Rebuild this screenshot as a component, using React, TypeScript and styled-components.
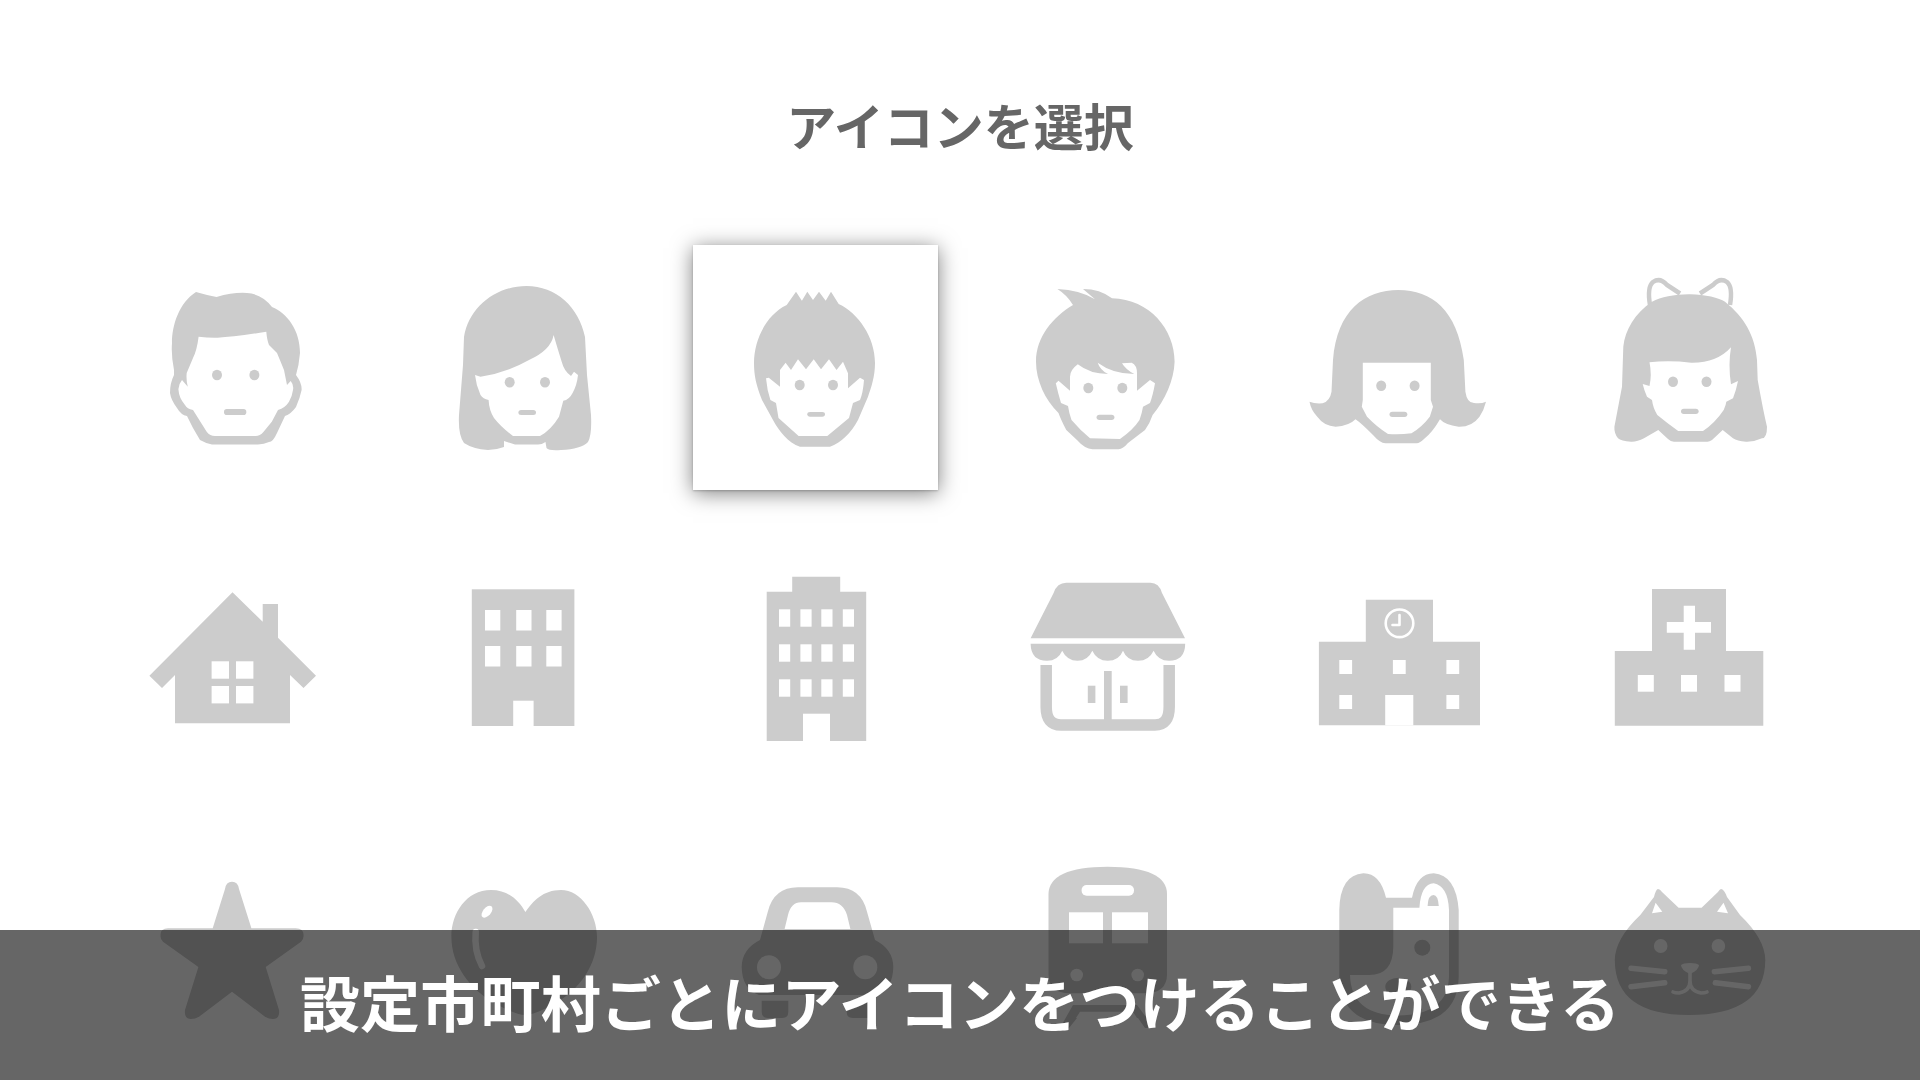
import React from 'react';
import styled, { createGlobalStyle } from 'styled-components';

const GlobalStyle = createGlobalStyle`
  html, body {
    margin: 0;
    padding: 0;
    background: #fff;
  }
`;

const Page = styled.div`
  position: relative;
  height: 1080px;
  overflow: hidden;
  padding-top: 90px;
  box-sizing: border-box;
  font-family: "Noto Sans CJK JP", "Noto Sans", sans-serif;
`;

const Title = styled.h1`
  margin: 0 0 87px;
  font-size: 50px;
  line-height: 68px;
  font-weight: 700;
  color: #666;
  text-align: center;
`;

const Grid = styled.div`
  display: grid;
  grid-template-columns: repeat(6, 245px);
  grid-auto-rows: 245px;
  gap: 47px;
  padding-left: 109px;
`;

const Cell = styled.div<{ $selected?: boolean }>`
  background: #fff;
  box-shadow: ${(props) =>
    props.$selected ? '0 3px 20px rgba(0, 0, 0, 0.5), 0 1px 2px rgba(0, 0, 0, 0.2)' : 'none'};
`;

const Glyph = styled.svg`
  display: block;
  width: 245px;
  height: 245px;
  fill: #ccc;

  .cut {
    fill: #fff;
  }
  .line {
    fill: none;
    stroke: #ccc;
  }
  .cutline {
    fill: none;
    stroke: #fff;
    stroke-linecap: round;
    stroke-linejoin: round;
  }
`;

const Banner = styled.div`
  position: absolute;
  left: 0;
  right: 0;
  bottom: 0;
  height: 150px;
  box-sizing: border-box;
  padding-bottom: 8px;
  display: flex;
  align-items: center;
  justify-content: center;
  background: rgba(0, 0, 0, 0.6);
`;

const Caption = styled.span`
  font-size: 60px;
  line-height: 1;
  font-weight: 700;
  letter-spacing: 0.2px;
  color: #fff;
`;

type FaceProps = { eyes: [number, number, number]; mouth: [number, number, number, number] };

// eyes: left x, right x, y / mouth: x, y, w, h
const Face = ({ eyes, mouth }: FaceProps) => (
  <>
    <ellipse cx={eyes[0]} cy={eyes[2]} rx={5} ry={5.3} />
    <ellipse cx={eyes[1]} cy={eyes[2]} rx={5} ry={5.3} />
    <rect x={mouth[0]} y={mouth[1]} width={mouth[2]} height={mouth[3]} rx={2.8} />
  </>
);

const Man = () => (
  <>
    <path d="M87 47Q97 50 107.5 52Q125 47 138 48Q153 49 163 62C178 68 191 85 191 108Q190 120 187 130Q193 138 192.6 145Q191 153 187 162Q182 169 176 171L168 188Q164 197 160 197Q155 199 149 199.5L103 199.5Q96 198 91 195L84 183L78 171Q72 170 68 163Q62 155 61 148Q61 138 65 130L65 125Q62 110 63 98C63 80 70 58 87 47Z" />
    <path className="cut" d="M89.6 91.7Q100 93 108.6 92.7Q125 92 157.3 86.7Q158 95 160 100L168 108Q173 120 175 125L178 140L181.7 136Q185 140 184 145Q183 152 180 156.7Q176 163 169 165L162.8 176.7L154.6 186.7Q151 191 146.5 191L106 191Q101 191 97.7 186.7L84 165Q78 164 76 160Q70 153 69.5 145Q69 140 73 135L78.8 141.7Q77 135 77.7 128L84 113Q88 105 89.6 91.7Z" />
    <Face eyes={[108, 145.4, 130]} mouth={[115, 164, 22.3, 6]} />
  </>
);

const LongHair = () => (
  <>
    <path d="M125.5 41C155 41 178 62 184 92L186 130L190 170Q191 190 187 197Q180 204 160 205Q148 206 145.5 203L144.5 197Q140 200 136 199.5L114 199.5L103 196L103 202Q95 205 87 205Q72 204 63 198Q57 190 58 170L62 120L63 92C68 62 95 41 125.5 41Z" />
    <path className="cut" d="M74 130L79.5 131.7Q105 128 128 115Q150 105 152.6 90Q157 105 160.7 116.7Q163 126 170 131L173 126.7L177 130Q176 140 171.6 148Q168 155 162.3 155.7L158 171.7Q150 185 139 191L112 191Q100 182 93 173Q88 165 87.6 155Q82 154 79.5 150Q75 140 74 130Z" />
    <Face eyes={[108.7, 144, 137.3]} mouth={[117.4, 165, 17.6, 5]} />
  </>
);

const SpikyBoy = () => (
  <>
    <path d="M93.7 60L103 46.7L108.9 55.7L114.3 46.7L120 55L126 46.7L132.7 55.7L138 46.7L145.7 59C165 68 182 92 182 118C182 132 178 143 175 151.7L165 175C158 188 148 198 137 201.7L107 201.7C95 198 86 186 80 175L69 155C63 140 61 130 61 118C61 95 73 70 93.7 60Z" />
    <path className="cut" d="M87 141.7L87 125L92.6 117.7L98 125L105 114.3L113 124.3L120.7 114.3L128 124.3L136 114.3L143.5 125L150 116.7L155 128.3L155 143.3L167 132.7L171 135Q170 148 167 155L160 158L156 173L134.3 191L105.6 191L85.5 173L83 158L77.4 155Q74 145 73 133.3L75.8 132.7Z" />
    <Face eyes={[106.7, 140, 140]} mouth={[114.3, 167, 17.7, 4.7]} />
  </>
);

const TuftBoy = () => (
  <>
    <path d="M72.4 44Q95 45 110 54.3L98 44Q115 44 127 53.3C165 54 189.6 85 189.6 116.7C189 135 180 155 167.6 170Q165 178 160 185L143 198Q138 204 133.6 204.3L107.4 204.3Q100 204 92 195L81.3 185Q76 175 73.5 168C60 155 51 135 51 116.7C51 92 68 72 88 60Q82 50 72.4 44Z" />
    <path className="cut" d="M92.8 119.3Q105 129 123 129Q115 125 112.7 117.7Q128 129 149.3 129Q141 125 137 118.3L146.7 117.7Q152 120 152 128.3L152 145.7L165 135L170 138.3Q168 150 165 158L158 161.7Q157 168 154.5 175Q148 185 135 194L105 193.3Q95 185 86.5 175Q84 168 83 161L76 158Q73 148 70.8 138.3L73.5 135.7L85 145.7L85 131.7Q85 125 92.8 119.3Z" />
    <Face eyes={[103.3, 137.3, 143]} mouth={[111.6, 169.7, 17.8, 5.3]} />
  </>
);

const BobHair = () => (
  <>
    <path d="M121.4 45C155 45 180 65 186.8 115L188.4 146.7Q190 158 197 158Q204 159 209 156.7Q207 165 202.5 171.7Q195 182 181.6 181.7Q168 180 163 174.3Q155 188 147 194Q143 198 139.7 198.3L108.3 198.3Q103 198 96 190Q84 178 78.5 174.3Q72 181 58.6 181.7Q47 181 40.3 171.7Q34 165 32.5 156.7Q38 159 45.6 158.3Q53 156 54.5 146.7L56 115C60 65 88 45 121.4 45Z" />
    <path className="cut" d="M85.8 117.7L153.8 117.7L153.8 155L156 161.7L152.8 171.7Q145 182 134.5 188.3Q122 190 111 189Q100 182 90 171.7L84.8 161.7L85.8 155Z" />
    <Face eyes={[104.2, 137.6, 140.7]} mouth={[112.5, 166.7, 17.8, 5.3]} />
  </>
);

const BowGirl = () => (
  <>
    <path className="line" strokeWidth="4.5" d="M81 60Q78 42 84 37Q91 32 98 40L111 48.5M161 60Q164 42 158 37Q151 32 144 40L131 48.5" />
    <path d="M119.7 49.3C135 49 150 53 156 56.7C175 72 186 90 188 115L188.7 135Q194 165 198 181.7Q198 193 193 193.3Q185 197 177 196.7Q168 196 164 193.3L153.7 185L143 195Q140 197 138 196.7L105.6 196.7Q102 197 99 194L89.3 185L75 193.3Q68 197 62 196.7Q52 196 49 193.3Q45 188 45.4 181.7L53 141.7L54.3 101.7C56 85 66 68 83 56.7C92 52 105 49.5 119.7 49.3Z" />
    <path className="cut" d="M80.5 117.3Q100 115 122.3 117.7Q148 118 162 102.3Q159 120 162 139.3L169 136Q167 146 164 153.3L157.3 156.7Q157 160 154.7 165Q146 178 134 186L109.2 186Q98 178 88.3 170Q84 163 83 155L78 151.7Q75 145 73.7 139L80.5 141Q83 130 80.5 117.3Z" />
    <Face eyes={[104, 137.5, 136.7]} mouth={[112, 163.7, 17.6, 5.3]} />
  </>
);

const House = () => (
  <>
    <path d="M123.5 55.3L153.7 84.7L153.7 67L169 67L169 100.7L207 138.7L194.5 151L181 138L181 186.3L66 186.3L66 138L53 151L40.4 138.7Z" />
    {[102.6, 127].map((x) =>
      [124.3, 149].map((y) => <rect key={`${x}-${y}`} className="cut" x={x} y={y} width={17.4} height={17.4} />),
    )}
  </>
);

const Office = () => (
  <>
    <rect x={70.8} y={52.3} width={102.6} height={136.7} />
    {[84, 115.2, 145.3].map((x) =>
      [73, 109].map((y) => <rect key={`${x}-${y}`} className="cut" x={x} y={y} width={15.3} height={20.5} />),
    )}
    <rect className="cut" x={112.2} y={163.7} width={20.4} height={25.3} />
  </>
);

const Tower = () => (
  <>
    <path d="M99.2 39.7H147.2V54.7H173.2V204H73.7V54.7H99.2Z" />
    {[86, 107.4, 128.3, 149.8].map((x) =>
      [72.3, 107.3, 142.3].map((y) => <rect key={`${x}-${y}`} className="cut" x={x} y={y} width={11.2} height={17.4} />),
    )}
    <rect className="cut" x={110} y={176.7} width={27} height={27.3} />
  </>
);

const Shop = () => (
  <>
    <path d="M68.6 56Q72 45.7 81.3 45.7H165.5Q174 45.7 177 56L200 101.3H45.6Z" />
    <path d="M45.6 106.7H200.2Q200 123.7 184 123.7Q173 123.7 168.6 113.7Q164 123.7 153 123.7Q142 123.7 138 113.7Q134 123.7 122.7 123.7Q112 123.7 107.3 113.7Q103 123.7 92.5 123.7Q82 123.7 77.2 113.7Q73 123.7 62 123.7Q46 123.7 45.6 106.7Z" />
    <path className="line" strokeWidth="11.5" d="M61.2 128V170Q61.2 188 76 188H170Q184.2 188 184.2 170V128" />
    <rect x={119} y={134} width={7.7} height={50} />
    <rect x={102.8} y={148.7} width={7.6} height={17.3} />
    <rect x={135} y={148.7} width={7.6} height={17.3} />
  </>
);

const School = () => (
  <>
    <path d="M88.8 62.7H156V104.7H203V188.3H41.9V104.7H88.8Z" />
    <circle className="cutline" cx={122.5} cy={86.3} r={13.8} strokeWidth={2.6} />
    <path className="cutline" strokeWidth={2.6} d="M122.5 78V88H115.5" />
    {[62.3, 115.9, 169.4].map((x) => (
      <rect key={x} className="cut" x={x} y={123} width={12.8} height={14} />
    ))}
    {[62.3, 169.4].map((x) => (
      <rect key={x} className="cut" x={x} y={158} width={12.8} height={14} />
    ))}
    <rect className="cut" x={108.2} y={158} width={28.1} height={30.3} />
  </>
);

const Hospital = () => (
  <>
    <path d="M83 52H157V114H194.3V188.7H45.8V114H83Z" />
    <path className="cut" d="M114.7 68.7H126V85H142V95.7H126V112.7H114.7V95.7H97.8V85H114.7Z" />
    {[68.8, 112, 155.5].map((x) => (
      <rect key={x} className="cut" x={x} y={138} width={16} height={16.7} />
    ))}
  </>
);

const Star = () => (
  <path d="M123 52.7Q117 52.7 116 60L103.7 99.3L59 99.3Q51 100 51.6 106Q51 110 54 112.7L89.4 138L76 181Q75 190 82 190Q86 190 90 187.7L123 162.7L156 187.7Q160 190 164 190Q171 190 170 181L156.7 138L192 112.7Q195 110 194.5 106Q195 100 186.8 99.3L142.4 99.3L130 60Q129 52.7 123 52.7Z" />
);

const Apple = () => (
  <>
    <path d="M124.4 83C118 72 108 61 90 61C65 61 50 85 50.4 108C50.4 135 68 160 95 175Q115 186 124 186Q133 186 153 175C180 160 196 135 196 108C196 85 180 61 160 61C142 61 132 72 124.4 83Z" />
    <ellipse className="cut" cx={86} cy={82.7} rx={4} ry={7} transform="rotate(40 86 82.7)" />
    <path className="cutline" strokeWidth={6.5} d="M74.7 103Q73 122 81 137" />
  </>
);

const Car = () => (
  <>
    <path d="M105.4 58.3H143.6Q168 58 174 82.7L182 111Q200 120 200.3 138Q200 160 183 166H66Q49 160 48.7 138Q49 120 67 111L74.8 82.7Q81 58 105.4 58.3Z" />
    <path className="cut" d="M91.6 100L157.4 100L154 86Q150 73.3 138.5 73.3H108Q98 73.3 95 86Z" />
    <circle className="cut" cx={76} cy={138.3} r={12} />
    <circle className="cut" cx={172.3} cy={138.3} r={12} />
    <path d="M68.7 171.7H95.3V183Q95.3 189 89 189H75Q68.7 189 68.7 183Z" />
    <path d="M153.7 171.7H180.3V183Q180.3 189 174 189H160Q153.7 189 153.7 183Z" />
  </>
);

const Train = () => (
  <>
    <path d="M63.5 65Q64 38 122.5 37.7Q182 38 182 65V145Q182 164.3 160 164.3H85Q63.5 164.3 63.5 145Z" />
    <rect className="cut" x={96.6} y={56} width={52.4} height={10.7} rx={5} />
    <rect className="cut" x={84} y={83.3} width={34} height={31} />
    <rect className="cut" x={127} y={83.3} width={36} height={31} />
    <circle className="cut" cx={91.7} cy={146} r={6.3} />
    <circle className="cut" cx={152.7} cy={146} r={6.3} />
    <path d="M88 176H152L169 199H160L153 189H92L84 199H75Z" />
    <path className="cut" d="M95 182.7H148L152 189H91Z" />
  </>
);

const Dog = () => (
  <>
    <path d="M86.3 44.3Q103 44 109 68.7H135Q140 44.3 156.7 44.3Q179 46 181.7 81V147.7Q181 196 121 196Q63 196 62.3 147.7V81Q63 46 86.3 44.3Z" />
    <path className="cut" d="M116.3 78.7H142.4Q144 55 156.7 54.3Q171 57 172 81V147.7Q171 186 121 186.5Q74 186 73 146H92.3Q116 146 116.3 117.7Z" />
    <path d="M150.6 77Q151 66 156.5 66Q161 66 161.8 77Z" />
    <circle cx={145.3} cy={118.7} r={8} />
    <ellipse cx={121.3} cy={157.7} rx={13} ry={9} />
  </>
);

const Cat = () => (
  <>
    <path d="M89 60Q91 60 93 63L109.6 78.7H132.6L149 63Q151 60 152 60Q155 60 158 68L171 86Q196 110 196.3 131Q196 186 119.8 186Q46 186 45.8 131Q46 110 71.3 86L85 68Q87 60 89 60Z" />
    <path className="cut" d="M86.6 73.7L93.3 82.7L83 84.3ZM154.5 73.7L148 82.7L159 84.3Z" />
    <ellipse className="cut" cx={91.7} cy={117} rx={6.8} ry={7} />
    <ellipse className="cut" cx={149.4} cy={117} rx={6.8} ry={7} />
    <path className="cut" d="M112 136Q114 134 121 134Q128 134 130 136Q130 141 121 145Q112 141 112 136Z" />
    <path className="cutline" strokeWidth={3.6} d="M121 142V152Q121 162 110 164Q106 164 104 163M121 152Q121 162 132 164Q136 164 138 163" />
    <path className="cutline" strokeWidth={5.4} strokeLinecap="butt" d="M62 139.3L95.8 142.7M62 157.7L95.8 153.7M145.3 142.7L179.5 139.3M146.3 153.7L179.5 157.7" />
  </>
);

const ICONS = [Man, LongHair, SpikyBoy, TuftBoy, BobHair, BowGirl, House, Office, Tower, Shop, School, Hospital, Star, Apple, Car, Train, Dog, Cat];

const SELECTED = 2;

const App = () => (
  <Page>
    <GlobalStyle />
    <Title>アイコンを選択</Title>
    <Grid>
      {ICONS.map((Icon, i) => (
        <Cell key={i} $selected={i === SELECTED}>
          <Glyph viewBox="0 0 245 245">
            <Icon />
          </Glyph>
        </Cell>
      ))}
    </Grid>
    <Banner>
      <Caption>設定市町村ごとにアイコンをつけることができる</Caption>
    </Banner>
  </Page>
);

export default App;
